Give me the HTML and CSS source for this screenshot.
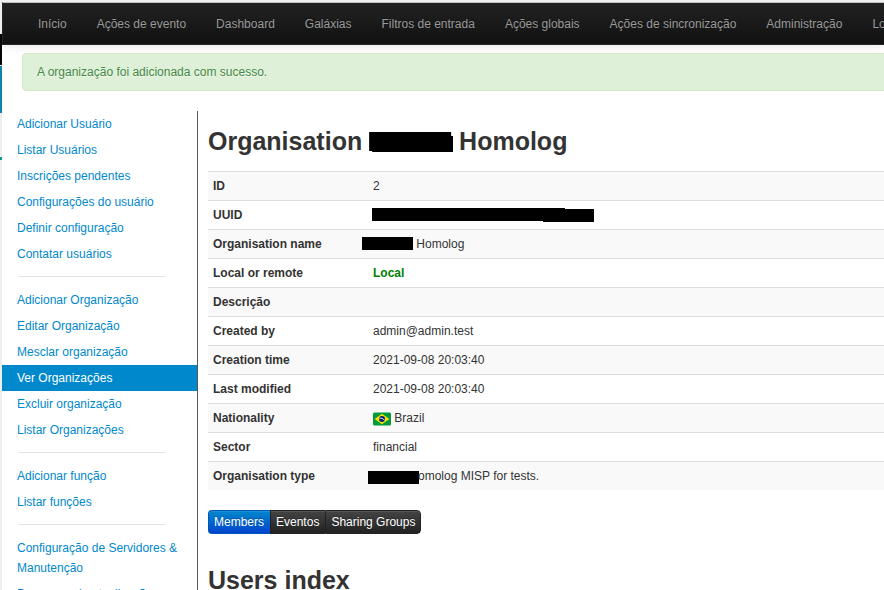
FILE: index.html
```html
<!DOCTYPE html>
<html lang="pt">
<head>
<meta charset="utf-8">
<title>Organisation</title>
<link rel="stylesheet" href="styles.css">
</head>
<body>
<div class="backdrop"></div>
<div class="app">
  <nav class="navbar">
    <a>Início</a><a>Ações de evento</a><a>Dashboard</a><a>Galáxias</a><a>Filtros de entrada</a><a>Ações globais</a><a>Ações de sincronização</a><a>Administração</a><a>Logs</a>
  </nav>
  <div class="alert">A organização foi adicionada com sucesso.</div>
  <div class="page">
    <ul class="side">
      <li>Adicionar Usuário</li>
      <li>Listar Usuários</li>
      <li>Inscrições pendentes</li>
      <li>Configurações do usuário</li>
      <li>Definir configuração</li>
      <li>Contatar usuários</li>
      <li class="divider"></li>
      <li>Adicionar Organização</li>
      <li>Editar Organização</li>
      <li>Mesclar organização</li>
      <li class="active">Ver Organizações</li>
      <li>Excluir organização</li>
      <li>Listar Organizações</li>
      <li class="divider"></li>
      <li>Adicionar função</li>
      <li>Listar funções</li>
      <li class="divider"></li>
      <li>Configuração de Servidores &amp; Manutenção</li>
      <li>Progresso da atualização</li>
    </ul>
    <main class="content">
      <h2>Organisation <span class="mask mask-title"></span> Homolog</h2>
      <dl class="meta">
        <div><dt>ID</dt><dd>2</dd></div>
        <div><dt>UUID</dt><dd><span class="mask mask-uuid"></span></dd></div>
        <div><dt>Organisation name</dt><dd><span class="mask mask-name"></span> Homolog</dd></div>
        <div><dt>Local or remote</dt><dd class="local">Local</dd></div>
        <div><dt>Descrição</dt><dd></dd></div>
        <div><dt>Created by</dt><dd>admin@admin.test</dd></div>
        <div><dt>Creation time</dt><dd>2021-09-08 20:03:40</dd></div>
        <div><dt>Last modified</dt><dd>2021-09-08 20:03:40</dd></div>
        <div><dt>Nationality</dt><dd><svg class="flag" viewBox="0 0 18 14"><rect y=".5" width="18" height="13" rx="1.5" fill="#009b3a"/><path d="M1.7 7 9 1.7 16.3 7 9 12.3z" fill="#fedf00"/><circle cx="9" cy="7" r="3" fill="#002776"/><path d="M6.3 6.2q3-.6 5.3 1.9" fill="none" stroke="#fff" stroke-width=".8"/></svg> Brazil</dd></div>
        <div><dt>Sector</dt><dd>financial</dd></div>
        <div><dt>Organisation type</dt><dd><span class="mask mask-type"></span>omolog MISP for tests.</dd></div>
      </dl>
      <div class="tabs"><button class="primary">Members</button><button>Eventos</button><button>Sharing Groups</button></div>
      <h2>Users index</h2>
    </main>
  </div>
</div>
</body>
</html>
```
FILE: styles.css
```css
* { box-sizing: border-box; }
html, body { height: 100%; overflow: hidden; }
body {
  margin: 0;
  display: flex;
  font: 12px/20px "Liberation Sans", Arial, sans-serif;
  color: #333;
  background: #fff;
}
.backdrop {
  flex: 0 0 2px;
  background: linear-gradient(#eee 0 34px, #05050c 34px 65px, #fff 65px 66px, #0a84a8 66px 113px, #eee 113px 157px, #0b9c8c 157px 160px, #eee 160px);
}
.app {
  flex: 1;
  min-width: 0;
  height: 590px;
  overflow: hidden;
  border-top: 2px solid #f0f0f0;
}
.navbar {
  display: flex;
  height: 43px;
  padding: 1px 0 0 20px;
  border-top: 1px solid #c9c1bd;
  border-bottom: 1px solid #252525;
  border-left: 1px solid #252525;
  background: linear-gradient(#222, #111);
  box-shadow: 0 1px 10px rgba(0, 0, 0, .1);
}
.navbar a {
  padding: 10px 15px;
  color: #999;
  white-space: nowrap;
  text-shadow: 0 -1px 0 rgba(0, 0, 0, .25);
}
.alert {
  height: 38px;
  margin: 8px -10px 20px 20px;
  padding: 8px 14px;
  border: 1px solid #d6e9c6;
  border-radius: 4px;
  background: #dff0d8;
  color: #468847;
  text-shadow: 0 1px 0 rgba(255, 255, 255, .5);
}
.page { display: flex; }
.side {
  flex: 0 0 196px;
  min-height: 479px;
  margin: 0;
  padding: 0;
  list-style: none;
  border-right: 1px solid #555;
  color: #08c;
}
.side li { padding: 3px 15px; }
.side .active { background: #08c; color: #fff; }
.side .divider {
  height: 1px;
  margin: 9px 31px 10px 16px;
  padding: 0;
  background: #e5e5e5;
}
.content { flex: 1; min-width: 0; padding: 10px 0 0 10px; }
h2 {
  margin: 0 0 10px;
  font-size: 25px;
  line-height: 40px;
  white-space: nowrap;
}
.meta { margin: 0 0 20px; }
.meta div {
  display: flex;
  height: 29px;
  padding: 4px 5px;
  border-top: 1px solid #ddd;
}
.meta div:nth-child(odd) { background: #f9f9f9; }
dt { flex: 0 0 160px; font-weight: bold; }
dd { margin: 0; white-space: nowrap; }
.local { color: green; font-weight: bold; }
.mask {
  display: inline-block;
  height: 13px;
  background: #000;
  vertical-align: -3px;
}
.mask-title {
  width: 84px;
  height: 20px;
  margin-right: -1px;
  vertical-align: -2px;
  clip-path: polygon(0 0, 82px 0, 82px 4px, 84px 4px, 84px 20px, 3px 20px, 3px 19px, 0 19px);
}
.mask-uuid {
  width: 222px;
  height: 14px;
  margin-left: -1px;
  clip-path: polygon(0 0, 193px 0, 193px 1px, 222px 1px, 222px 14px, 171px 14px, 171px 13px, 0 13px);
}
.mask-name { width: 51px; height: 13px; margin-left: -11px; vertical-align: -2px; }
.mask-type { width: 51px; margin-left: -5px; margin-right: -1px; vertical-align: -4px; }
.flag { width: 18px; height: 14px; vertical-align: -4px; }
.tabs { display: flex; height: 24px; margin-bottom: 26px; }
.tabs button {
  padding: 1px 6px 1px 5px;
  border: 1px solid #222;
  border-width: 1px 0 1px 1px;
  background: linear-gradient(#444, #222);
  color: #fff;
  font: inherit;
  text-shadow: 0 -1px 0 rgba(0, 0, 0, .25);
  box-shadow: inset 0 1px 0 rgba(255, 255, 255, .1);
}
.tabs .primary {
  border-color: #05b;
  border-radius: 4px 0 0 4px;
  background: linear-gradient(#08c, #04c);
}
.tabs button:last-child { padding-right: 5px; border-right-width: 1px; border-radius: 0 4px 4px 0; }
```
